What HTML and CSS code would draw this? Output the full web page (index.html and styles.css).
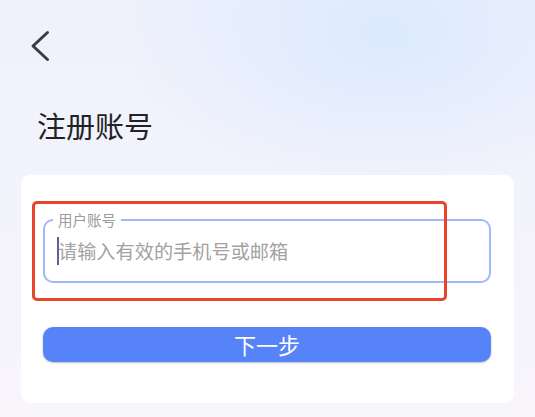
FILE: index.html
```html
<!DOCTYPE html>
<html lang="zh">
<head>
<meta charset="utf-8">
<title>注册账号</title>
<link rel="stylesheet" href="styles.css">
</head>
<body>
<div class="page">
  <header class="topbar">
    <button class="back" aria-label="返回">
      <svg width="24" height="34" viewBox="0 0 24 34"><path d="M19.5 3.5 L5 17 L19.5 30.5" fill="none" stroke="#3c3b45" stroke-width="3" stroke-linecap="round" stroke-linejoin="round"/></svg>
    </button>
  </header>
  <h1 class="title">注册账号</h1>
  <section class="card">
    <div class="field">
      <span class="field-label">用户账号</span>
      <span class="caret"></span>
      <span class="placeholder">请输入有效的手机号或邮箱</span>
    </div>
    <button class="next">下一步</button>
    <div class="highlight"></div>
  </section>
</div>
</body>
</html>
```
FILE: styles.css
```css
html, body {
  margin: 0;
  padding: 0;
}
body {
  width: 535px;
  height: 417px;
  overflow: hidden;
  font-family: "Noto Sans CJK SC", "Noto Sans", sans-serif;
  background:
    radial-gradient(ellipse 260px 160px at 72% 8%, rgba(220, 234, 253, 1) 0%, rgba(220, 234, 253, 0) 100%),
    linear-gradient(180deg, #eef1fc 0%, #f3f3fc 50%, #f8f5fb 100%);
}
.page {
  display: flex;
  flex-direction: column;
  height: 417px;
}
.topbar {
  height: 80px;
  padding: 29px 0 0 28px;
  box-sizing: border-box;
}
.back {
  border: 0;
  padding: 0;
  background: none;
  display: block;
  width: 24px;
  height: 34px;
}
.title {
  margin: 25px 0 0 37px;
  font-size: 29px;
  line-height: 40px;
  font-weight: 400;
  color: #222226;
  letter-spacing: 0;
}
.card {
  position: relative;
  margin: 30px 21px 0 21px;
  background: #ffffff;
  border-radius: 9px;
  padding: 44px 23px 41px 22px;
}
.field {
  position: relative;
  height: 64px;
  box-sizing: border-box;
  border: 2px solid #9fb8fa;
  border-radius: 10px;
  display: flex;
  align-items: center;
  padding-left: 12px;
}
.field-label {
  position: absolute;
  left: 8px;
  top: -11px;
  padding: 0 5px 0 5px;
  background: #ffffff;
  font-size: 14.5px;
  line-height: 20px;
  color: #9b9b9b;
}
.caret {
  width: 2px;
  height: 28px;
  background: #6b5a9c;
  margin-right: -1px;
  position: relative;
  z-index: 1;
}
.placeholder {
  font-size: 19.2px;
  line-height: 28px;
  color: #a2a2a2;
}
.next {
  display: block;
  width: 100%;
  margin-top: 44px;
  height: 35px;
  border: 0;
  border-radius: 10px;
  background: #5683f8;
  color: #ffffff;
  font-family: "Noto Sans CJK SC", "Noto Sans", sans-serif;
  font-size: 22px;
  line-height: 35px;
  padding: 0;
  box-shadow: 0 1px 2px rgba(60, 70, 110, 0.35);
}
.highlight {
  position: absolute;
  left: 11px;
  top: 26px;
  width: 415px;
  height: 100px;
  box-sizing: border-box;
  border: 3px solid #e8432b;
  border-radius: 5px;
  pointer-events: none;
}
```
